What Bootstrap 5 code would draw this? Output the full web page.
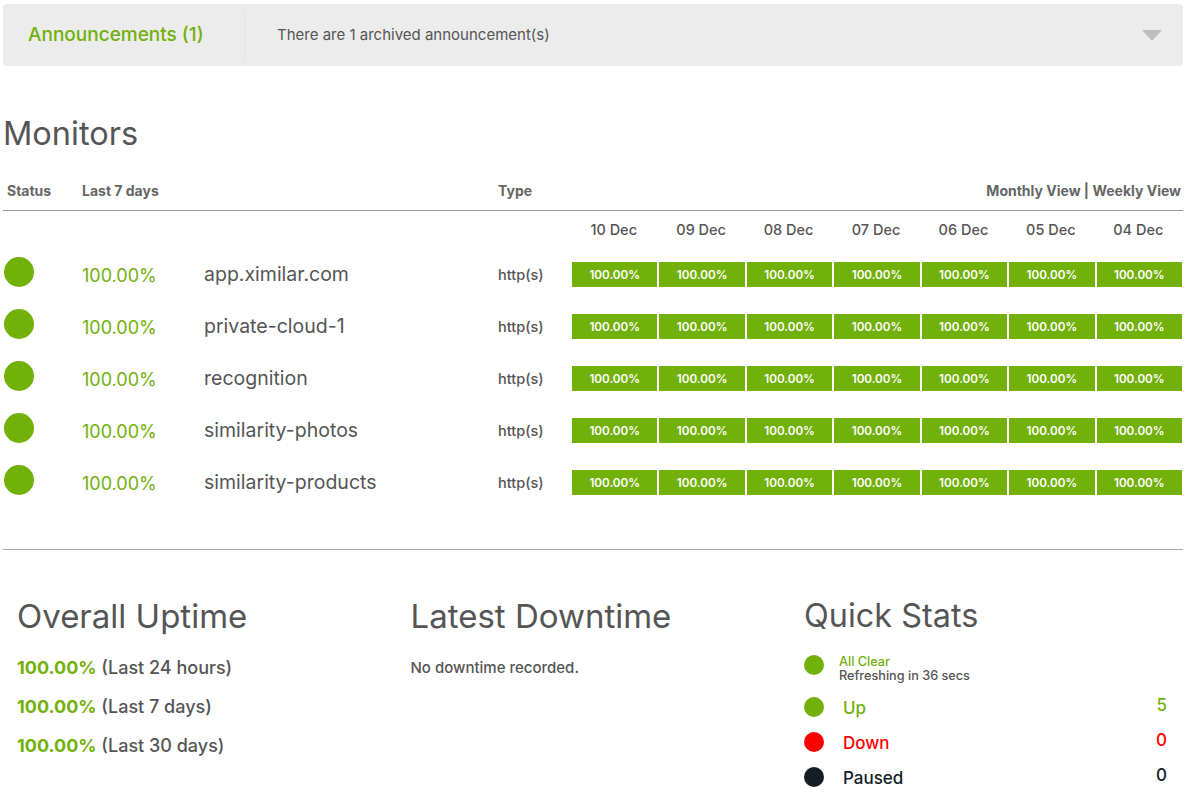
<!DOCTYPE html>
<html lang="en">
<head>
<meta charset="utf-8">
<title>Monitors</title>
<link href="https://cdn.jsdelivr.net/npm/bootstrap@5.3.0/dist/css/bootstrap.min.css" rel="stylesheet">
<style>
body{font-family:Inter,"Open Sans","Liberation Sans",sans-serif;color:#555;background:#fff;overflow:hidden}
.page-wrap{width:1180px;margin:4px 0 0 3px}
.ann-bar{height:62px;background:#ececec;border-radius:4px}
.ann-title{width:242px;padding-left:25px;height:50px;border-right:1px solid #e2e2e2;font-size:19px;font-weight:500;color:#72b00a;line-height:50px}
.ann-text{padding-left:32px;font-size:15px;color:#555}
.ann-caret{width:0;height:0;border-left:10px solid transparent;border-right:10px solid transparent;border-top:11px solid #bdbdbd;margin-right:21px}
.page-title{font-size:32.5px;font-weight:400;color:#555;margin:48px 0 0 0;line-height:40px}
.head-row{height:39px;margin-top:18px;border-bottom:1px solid #999;font-size:14px;font-weight:700;color:#666;padding-bottom:9px}
.col-status{width:79px;padding-left:4px}
.col-ratio{width:122px}
.col-name{width:294px}
.col-type{width:74px}
.col-days{width:610px;display:grid;grid-template-columns:repeat(7,1fr);column-gap:2px}
.date-row{height:37px;font-size:14.5px;font-weight:500;color:#555}
.date-cell{text-align:center;margin-left:-2px}
.mon-row{height:52px}
.mon-dot{width:30px;height:30px;border-radius:50%;background:#72b00a;margin:0 0 4px -3px}
.mon-ratio{font-size:18px;color:#72b00a;padding-top:2px}
.mon-name{font-size:19.5px;color:#555;padding-top:2px}
.mon-type{font-size:14.5px;font-weight:500;color:#555;padding-top:2px}
.day-cell{height:25px;background:#72b00a;color:#fff;font-size:11.7px;font-weight:600;text-align:center;line-height:27px}
.head-right{padding-right:2px}
.sect-line{border-top:1px solid #aaa;margin-top:41px}
.stat-col{width:393.5px;padding-left:14px}
.stat-title{font-size:33px;font-weight:400;color:#555;line-height:38px;margin:47px 0 0}
.qs-title{font-size:32.4px}
.up-line{font-size:18px;font-weight:500;color:#555;line-height:39px}
.up-line b{color:#72b00a;font-weight:700}
.first-line{margin-top:13px}
.none-text{font-size:15px;font-weight:500;color:#555;line-height:39px;margin-top:13px}
.qs-wrap{width:377px}
.qs-dot{width:20px;height:20px;border-radius:50%;flex:none}
.dot-up{background:#72b00a}.dot-down{background:#f00}.dot-paused{background:#141c25}
.qs-clear{margin-top:20px;height:42px}
.qs-clear-text{margin-left:15px;font-size:12.7px;font-weight:500;line-height:14px;color:#555}
.qs-clear-text span{color:#72b00a;display:block}
.qs-item{height:35px;font-size:17px;font-weight:500}
.qs-label{margin-left:19px;margin-top:-1px}
.qs-num{margin-left:auto;margin-top:-4px}
.tone-up{color:#72b00a}.tone-down{color:#f00}.tone-paused{color:#141c25}
</style>
</head>
<body>
<div class="page-wrap">
  <div class="ann-bar d-flex align-items-center">
    <div class="ann-title">Announcements (1)</div>
    <div class="ann-text flex-grow-1">There are 1 archived announcement(s)</div>
    <div class="ann-caret"></div>
  </div>

  <h1 class="page-title">Monitors</h1>

  <div class="head-row d-flex align-items-end">
    <div class="col-status">Status</div>
    <div class="col-ratio">Last 7 days</div>
    <div class="col-name"></div>
    <div class="col-type">Type</div>
    <div class="flex-grow-1 text-end head-right">Monthly View | Weekly View</div>
  </div>

  <div class="date-row d-flex align-items-center">
    <div class="col-status"></div><div class="col-ratio"></div><div class="col-name"></div><div class="col-type"></div>
    <div class="col-days">
      <div class="date-cell">10 Dec</div><div class="date-cell">09 Dec</div><div class="date-cell">08 Dec</div><div class="date-cell">07 Dec</div><div class="date-cell">06 Dec</div><div class="date-cell">05 Dec</div><div class="date-cell">04 Dec</div>
    </div>
  </div>

  <div class="mon-row d-flex align-items-center">
    <div class="col-status"><div class="mon-dot"></div></div><div class="col-ratio mon-ratio">100.00%</div><div class="col-name mon-name">app.ximilar.com</div><div class="col-type mon-type">http(s)</div>
    <div class="col-days"><div class="day-cell">100.00%</div><div class="day-cell">100.00%</div><div class="day-cell">100.00%</div><div class="day-cell">100.00%</div><div class="day-cell">100.00%</div><div class="day-cell">100.00%</div><div class="day-cell">100.00%</div></div>
  </div>
  <div class="mon-row d-flex align-items-center">
    <div class="col-status"><div class="mon-dot"></div></div><div class="col-ratio mon-ratio">100.00%</div><div class="col-name mon-name">private-cloud-1</div><div class="col-type mon-type">http(s)</div>
    <div class="col-days"><div class="day-cell">100.00%</div><div class="day-cell">100.00%</div><div class="day-cell">100.00%</div><div class="day-cell">100.00%</div><div class="day-cell">100.00%</div><div class="day-cell">100.00%</div><div class="day-cell">100.00%</div></div>
  </div>
  <div class="mon-row d-flex align-items-center">
    <div class="col-status"><div class="mon-dot"></div></div><div class="col-ratio mon-ratio">100.00%</div><div class="col-name mon-name">recognition</div><div class="col-type mon-type">http(s)</div>
    <div class="col-days"><div class="day-cell">100.00%</div><div class="day-cell">100.00%</div><div class="day-cell">100.00%</div><div class="day-cell">100.00%</div><div class="day-cell">100.00%</div><div class="day-cell">100.00%</div><div class="day-cell">100.00%</div></div>
  </div>
  <div class="mon-row d-flex align-items-center">
    <div class="col-status"><div class="mon-dot"></div></div><div class="col-ratio mon-ratio">100.00%</div><div class="col-name mon-name">similarity-photos</div><div class="col-type mon-type">http(s)</div>
    <div class="col-days"><div class="day-cell">100.00%</div><div class="day-cell">100.00%</div><div class="day-cell">100.00%</div><div class="day-cell">100.00%</div><div class="day-cell">100.00%</div><div class="day-cell">100.00%</div><div class="day-cell">100.00%</div></div>
  </div>
  <div class="mon-row d-flex align-items-center">
    <div class="col-status"><div class="mon-dot"></div></div><div class="col-ratio mon-ratio">100.00%</div><div class="col-name mon-name">similarity-products</div><div class="col-type mon-type">http(s)</div>
    <div class="col-days"><div class="day-cell">100.00%</div><div class="day-cell">100.00%</div><div class="day-cell">100.00%</div><div class="day-cell">100.00%</div><div class="day-cell">100.00%</div><div class="day-cell">100.00%</div><div class="day-cell">100.00%</div></div>
  </div>

  <div class="sect-line"></div>

  <div class="d-flex">
    <div class="stat-col">
      <h2 class="stat-title">Overall Uptime</h2>
      <div class="up-line first-line"><b>100.00%</b> (Last 24 hours)</div>
      <div class="up-line"><b>100.00%</b> (Last 7 days)</div>
      <div class="up-line"><b>100.00%</b> (Last 30 days)</div>
    </div>
    <div class="stat-col">
      <h2 class="stat-title">Latest Downtime</h2>
      <div class="none-text">No downtime recorded.</div>
    </div>
    <div class="stat-col qs-wrap">
      <h2 class="stat-title qs-title">Quick Stats</h2>
      <div class="qs-clear d-flex">
        <div class="qs-dot dot-up"></div>
        <div class="qs-clear-text"><span>All Clear</span>Refreshing in 36 secs</div>
      </div>
      <div class="qs-item d-flex tone-up"><div class="qs-dot dot-up"></div><div class="qs-label">Up</div><div class="qs-num">5</div></div>
      <div class="qs-item d-flex tone-down"><div class="qs-dot dot-down"></div><div class="qs-label">Down</div><div class="qs-num">0</div></div>
      <div class="qs-item d-flex tone-paused"><div class="qs-dot dot-paused"></div><div class="qs-label">Paused</div><div class="qs-num">0</div></div>
    </div>
  </div>
</div>
<script src="https://cdn.jsdelivr.net/npm/bootstrap@5.3.0/dist/js/bootstrap.bundle.min.js"></script>
</body>
</html>
